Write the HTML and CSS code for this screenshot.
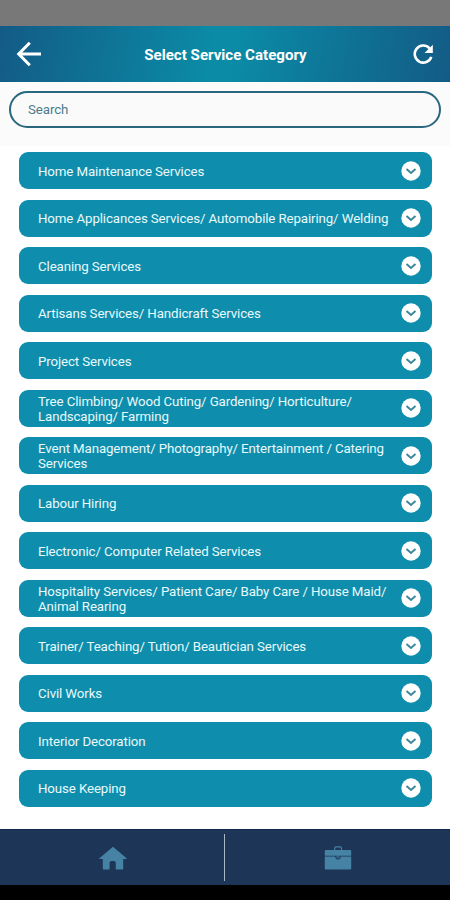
FILE: index.html
```
<!DOCTYPE html>
<html lang="en">
<head>
    <meta charset="UTF-8">
    <meta name="viewport" content="width=device-width, initial-scale=1.0">
    <title>Select Service Category</title>
    <link rel="stylesheet" href="styles.css">
</head>
<body>
    <div class="status-bar"></div>

    <header class="header">
        <button class="icon-button" aria-label="Back">
            <svg width="26" height="26" viewBox="0 0 26 26" fill="none" stroke="#fff" stroke-width="3">
                <path d="M13.800 1.800L2.700 13l11.100 11.200M2.800 13H25"/>
            </svg>
        </button>
        <h1>Select Service Category</h1>
        <button class="icon-button" aria-label="Refresh">
            <svg width="20" height="20" viewBox="0 0 20 20">
                <path d="M16.500 4.300A8.500 8.500 0 1 0 18.300 12.800" fill="none" stroke="#fff" stroke-width="2.600"/>
                <path d="M19.800.8v8.200h-8.200z" fill="#fff"/>
            </svg>
        </button>
    </header>

    <div class="search">
        <input type="text" id="search" placeholder="Search" autocomplete="off">
    </div>

    <main class="categories" id="categories"></main>

    <nav class="bottom-nav">
        <a class="nav-item" aria-label="Home">
            <svg width="28" height="24" viewBox="0 0 28 24" fill="#4682a4">
                <path d="M14 .8L.4 12.2c-.4.4-.2.8.3.8h3.1v9.4c0 .7.4 1.100 1 1.100h5.800v-6.300c0-1.400.8-2.200 2-2.200h2.200c1.200 0 2 .8 2 2.200v6.300h6.400c.6 0 1-.4 1-1.100V13h3.100c.5 0 .7-.4.3-.8z"/>
            </svg>
        </a>
        <a class="nav-item" aria-label="Jobs">
            <svg width="28" height="24" viewBox="0 0 28 24" fill="#4682a4">
                <path d="M10.700 4.500V2.300c0-.9.5-1.400 1.400-1.400h4c.9 0 1.400.5 1.400 1.400v2.200" fill="none" stroke="#4682a4" stroke-width="1.200"/>
                <path d="M2 4h24c.8 0 1.200.5 1.200 1.200v4.500H.8V5.200C.8 4.500 1.200 4 2 4z"/>
                <path d="M.8 10.600h10.400c.2 2 1.200 3 2.800 3s2.600-1 2.800-3h10.400v11.700c0 .8-.4 1.200-1.200 1.200H2c-.8 0-1.200-.4-1.200-1.200z"/>
                <path d="M12.200 9.500h3.600v1.600c0 1-.8 1.600-1.800 1.600s-1.800-.6-1.800-1.600z" opacity=".6"/>
            </svg>
        </a>
    </nav>
    <div class="system-bar"></div>

    <script>
        const categories = [
            'Home Maintenance Services',
            'Home Applicances Services/ Automobile Repairing/ Welding',
            'Cleaning Services',
            'Artisans Services/ Handicraft Services',
            'Project Services',
            'Tree Climbing/ Wood Cuting/ Gardening/ Horticulture/ Landscaping/ Farming',
            'Event Management/ Photography/ Entertainment / Catering Services',
            'Labour Hiring',
            'Electronic/ Computer Related Services',
            'Hospitality Services/ Patient Care/ Baby Care / House Maid/ Animal Rearing',
            'Trainer/ Teaching/ Tution/ Beautician Services',
            'Civil Works',
            'Interior Decoration',
            'House Keeping'
        ];

        document.getElementById('categories').innerHTML = categories.map(name => `
            <button class="category">
                <span>${name}</span>
                <svg width="20" height="20" viewBox="0 0 20 20">
                    <circle cx="10" cy="10" r="9.7" fill="#fff"/>
                    <path d="M5.500 8l4.500 4 4.500-4" fill="none" stroke="#3b879a" stroke-width="1.900"/>
                </svg>
            </button>`).join('');
    </script>
</body>
</html>
```
FILE: styles.css
```
:root {
    --teal: #0e8eac;
    --navy: #1d3557;
    --border: #28677e;
}

* {
    margin: 0;
    padding: 0;
    box-sizing: border-box;
    font-family: Roboto, Arial, sans-serif;
}

body {
    height: 100vh;
    display: flex;
    flex-direction: column;
    background-color: #fff;
    overflow: hidden;
}

button {
    border: none;
    background: none;
    cursor: pointer;
}

svg {
    display: block;
    flex-shrink: 0;
}

.status-bar {
    height: 26px;
    background-color: #787878;
}

.header {
    height: 56px;
    padding: 0 17px 0 16px;
    display: flex;
    justify-content: space-between;
    align-items: center;
    background: linear-gradient(100deg, #135b86 0%, #0b8ba6 47%, #0b8ba6 52%, #135b86 100%);
}

.header h1 {
    padding: 2px 4px 0 0;
    font-size: 15.1px;
    font-weight: bold;
    color: #fff;
}

.search {
    height: 64px;
    padding: 9px 9px 0;
    background-color: #fbfbfb;
}

.search input {
    display: block;
    width: 100%;
    height: 36.5px;
    padding: 1px 17px 0;
    border: 2px solid var(--border);
    border-radius: 19px;
    background-color: #fafafa;
    font-size: 13.3px;
    letter-spacing: -0.1px;
    color: var(--border);
}

.search input::placeholder {
    color: #4b7c8c;
    opacity: 1;
}

.categories {
    flex: 1;
    padding: 6px 18px 0 19px;
    display: flex;
    flex-direction: column;
    gap: 10.5px;
}

.category {
    height: 37px;
    flex-shrink: 0;
    padding: 0 11px 0 19px;
    display: flex;
    justify-content: space-between;
    align-items: center;
    border-radius: 9px;
    background-color: var(--teal);
    color: #e9f9fd;
    font-size: 13.3px;
    line-height: 15px;
    letter-spacing: -0.12px;
    text-align: left;
}

.category span {
    width: 355px;
    padding-top: 1px;
}

.bottom-nav {
    height: 56px;
    display: flex;
    border-top: 1px solid #10294a;
    background-color: var(--navy);
}

.nav-item {
    flex: 1;
    display: flex;
    justify-content: center;
    align-items: center;
    position: relative;
}

.nav-item:first-child::after {
    content: "";
    position: absolute;
    top: 4px;
    right: 0;
    width: 1.5px;
    height: 47px;
    background-color: #a9b7c6;
}

.system-bar {
    height: 15px;
    background-color: #000;
}
```
